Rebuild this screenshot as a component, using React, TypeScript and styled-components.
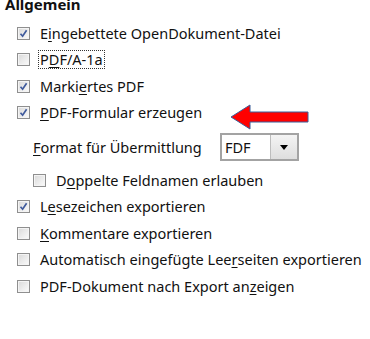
import React from 'react';
import styled, { createGlobalStyle } from 'styled-components';

const GlobalStyle = createGlobalStyle`
  html, body {
    margin: 0;
    padding: 0;
    background: #ffffff;
  }
  body {
    font-family: 'Noto Sans', 'Open Sans', sans-serif;
    color: #111111;
  }
`;

const Page = styled.div`
  position: relative;
  width: 370px;
  height: 339px;
  overflow: hidden;
  background: #ffffff;
`;

const Heading = styled.div`
  font-weight: bold;
  font-size: 15px;
  line-height: 20px;
  height: 20px;
  margin-top: -6px;
  padding-left: 5px;
`;

const Options = styled.div`
  display: flex;
  flex-direction: column;
  padding-left: 17px;
  padding-top: 6px;
`;

const Row = styled.label<{ $indent?: number; $gap?: number }>`
  display: flex;
  align-items: center;
  height: 26.5px;
  gap: 9px;
  font-size: 14.5px;
  margin-left: ${p => p.$indent ?? 0}px;
  margin-top: ${p => p.$gap ?? 0}px;
  white-space: nowrap;
`;

const Box = styled.span<{ $checked?: boolean }>`
  flex: none;
  width: 11px;
  height: 11px;
  border: 1px solid #8f8f8f;
  background: linear-gradient(135deg, #d8d8d8 0%, #ececec 55%, #fbfbfb 100%);
  box-shadow: inset 0 0 0 1px #f4f4f4;
  display: flex;
  align-items: center;
  justify-content: center;
`;

const Label = styled.span<{ $focused?: boolean }>`
  padding: 0 1px;
  outline: ${p => (p.$focused ? '1px dotted #333' : 'none')};
  outline-offset: 0;
  line-height: 17px;
`;

const Key = styled.span`
  text-decoration: underline;
  text-underline-offset: 2px;
`;

const FormatRow = styled.div`
  display: flex;
  align-items: center;
  height: 28px;
  margin-left: 16px;
  margin-top: 7px;
  font-size: 14.5px;
`;

const FormatLabel = styled.span`
  width: 187px;
  flex: none;
`;

const Combo = styled.div`
  display: flex;
  width: 79px;
  height: 28px;
  box-sizing: border-box;
  border: 2px solid #a3a3a3;
  background: #ffffff;
`;

const ComboValue = styled.span`
  flex: 1;
  display: flex;
  align-items: center;
  padding-left: 3px;
  font-size: 14.5px;
`;

const ComboButton = styled.span`
  width: 26px;
  flex: none;
  display: flex;
  align-items: center;
  justify-content: center;
  border-left: 1px solid #bdbdbd;
  background: linear-gradient(#f4f4f4, #dedede);
`;

const Triangle = styled.span`
  width: 0;
  height: 0;
  border-left: 4px solid transparent;
  border-right: 4px solid transparent;
  border-top: 5px solid #000000;
`;

const Arrow = styled.svg`
  position: absolute;
  left: 230px;
  top: 104px;
`;

const Check = () => (
  <svg width="9" height="9" viewBox="0 0 9 9">
    <path d="M1.5 4.8 L3.6 7.2 L7.6 1.2" fill="none" stroke="#3f5a9c" strokeWidth="1.7" />
  </svg>
);

type OptionProps = {
  checked?: boolean;
  focused?: boolean;
  indent?: number;
  gap?: number;
  children: React.ReactNode;
};

const Option: React.FC<OptionProps> = ({ checked, focused, indent, gap, children }) => (
  <Row $indent={indent} $gap={gap}>
    <Box $checked={checked}>{checked && <Check />}</Box>
    <Label $focused={focused}>{children}</Label>
  </Row>
);

const App: React.FC = () => (
  <Page>
    <GlobalStyle />
    <Heading>Allgemein</Heading>
    <Options>
      <Option checked>
        E<Key>i</Key>ngebettete OpenDokument-Datei
      </Option>
      <Option focused>
        P<Key>D</Key>F/A-1a
      </Option>
      <Option checked>
        Marki<Key>e</Key>rtes PDF
      </Option>
      <Option checked>
        <Key>P</Key>DF-Formular erzeugen
      </Option>
      <FormatRow>
        <FormatLabel>
          <Key>F</Key>ormat für Übermittlung
        </FormatLabel>
        <Combo>
          <ComboValue>FDF</ComboValue>
          <ComboButton>
            <Triangle />
          </ComboButton>
        </Combo>
      </FormatRow>
      <Option indent={16} gap={6}>
        D<Key>o</Key>ppelte Feldnamen erlauben
      </Option>
      <Option checked>
        L<Key>e</Key>sezeichen exportieren
      </Option>
      <Option>
        <Key>K</Key>ommentare exportieren
      </Option>
      <Option>
        Automatisch eingefügte Lee<Key>r</Key>seiten exportieren
      </Option>
      <Option>
        PDF-Dokument nach Export an<Key>z</Key>eigen
      </Option>
    </Options>
    <Arrow width="80" height="27" viewBox="0 0 80 27">
      <polygon
        points="1,13 20,1 20,8 78,8 78,18 20,18 20,25"
        fill="#ff0000"
        stroke="#3b5f9a"
        strokeWidth="1"
      />
    </Arrow>
  </Page>
);

export default App;
